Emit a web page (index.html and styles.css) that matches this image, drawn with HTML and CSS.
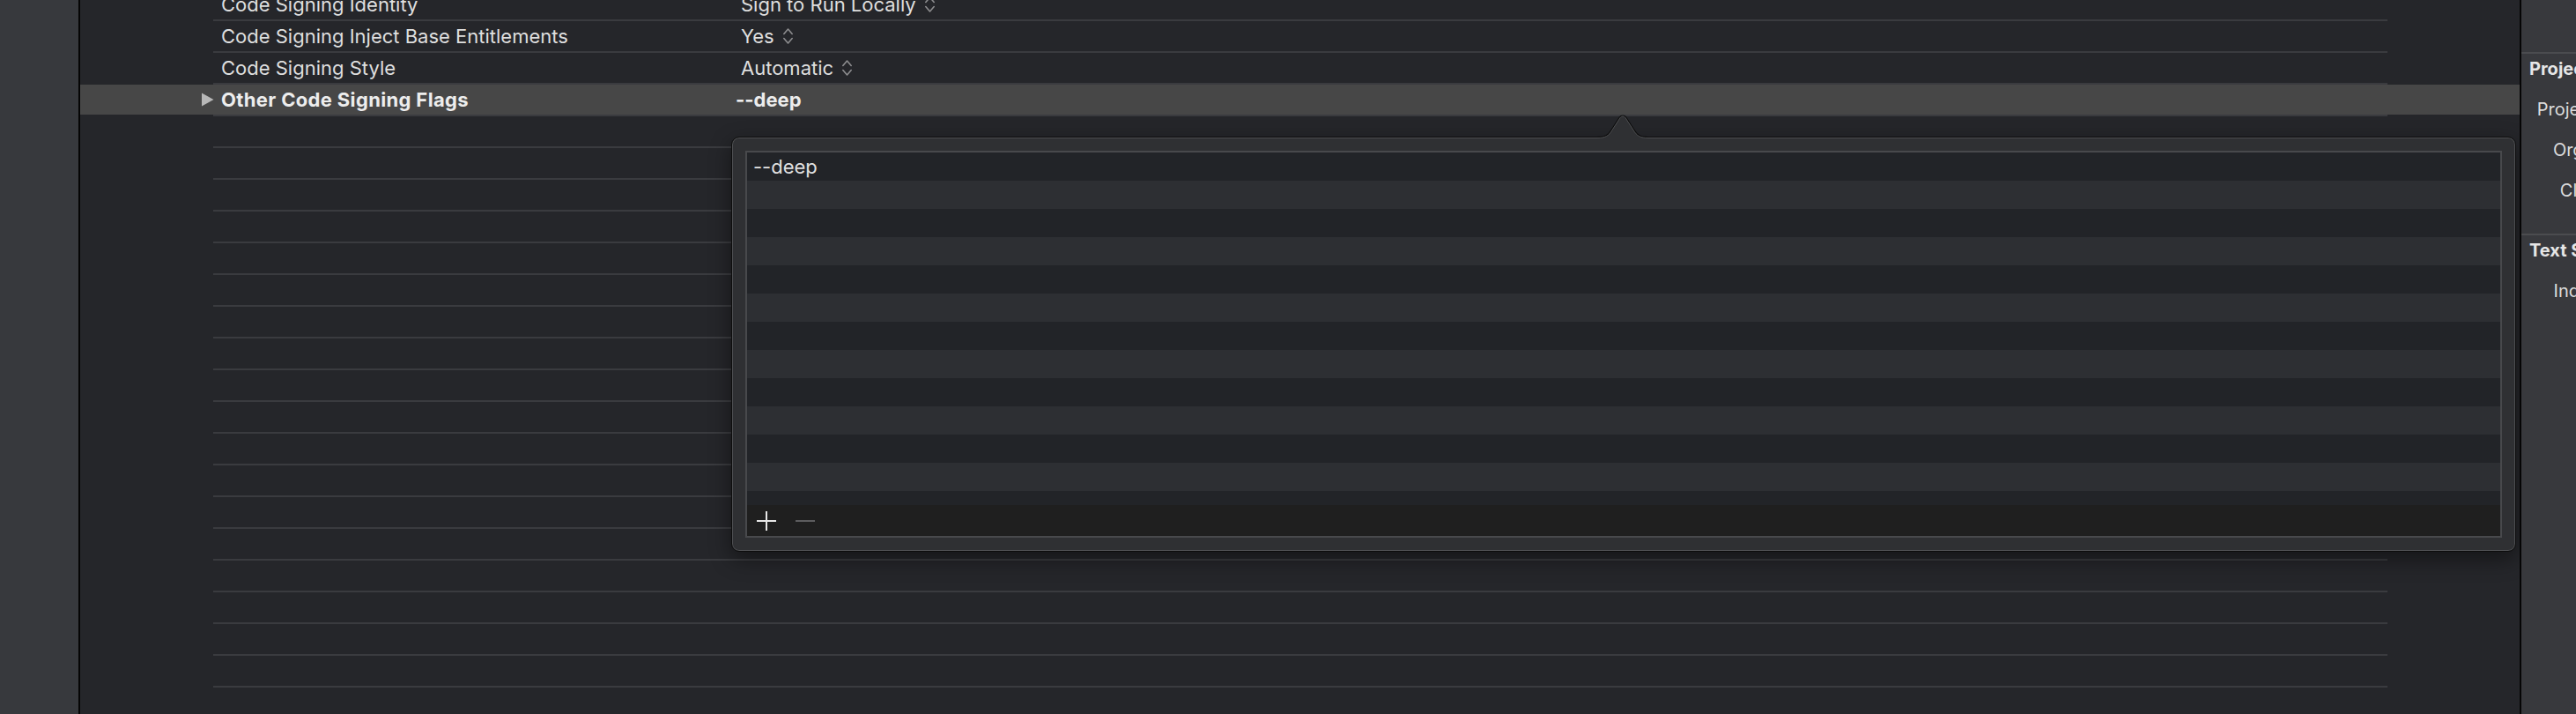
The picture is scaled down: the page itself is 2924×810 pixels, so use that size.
FILE: index.html
```html
<!DOCTYPE html>
<html lang="en">
<head>
<meta charset="utf-8">
<title>Build Settings</title>
<link rel="stylesheet" href="styles.css">
</head>
<body>
<div class="app">
  <aside class="nav"></aside>
  <main class="editor">
    <div class="rows">
      <div class="row">
        <div class="row-main"><div class="gutter"></div><div class="name">Code Signing Identity</div><div class="value"><span class="popup">Sign to Run Locally<svg class="chev" viewBox="0 0 13 20"><path d="M1.8 7.5 L6.5 2 L11.2 7.5 M1.8 12.5 L6.5 18 L11.2 12.5"/></svg></span></div></div>
        <div class="row-line"></div>
      </div>
      <div class="row">
        <div class="row-main"><div class="gutter"></div><div class="name">Code Signing Inject Base Entitlements</div><div class="value"><span class="popup">Yes<svg class="chev" viewBox="0 0 13 20"><path d="M1.8 7.5 L6.5 2 L11.2 7.5 M1.8 12.5 L6.5 18 L11.2 12.5"/></svg></span></div></div>
        <div class="row-line"></div>
      </div>
      <div class="row">
        <div class="row-main"><div class="gutter"></div><div class="name">Code Signing Style</div><div class="value"><span class="popup">Automatic<svg class="chev" viewBox="0 0 13 20"><path d="M1.8 7.5 L6.5 2 L11.2 7.5 M1.8 12.5 L6.5 18 L11.2 12.5"/></svg></span></div></div>
        <div class="row-line"></div>
      </div>
      <div class="row selected">
        <div class="row-main"><div class="gutter"><svg class="disclosure" viewBox="0 0 15 16"><path d="M1 0.5 L14.5 8 L1 15.5 Z"/></svg></div><div class="name">Other Code Signing Flags</div><div class="value">--deep</div></div>
        <div class="row-line"></div>
      </div>
      <div class="row"><div class="row-main"></div><div class="row-line"></div></div>
      <div class="row"><div class="row-main"></div><div class="row-line"></div></div>
      <div class="row"><div class="row-main"></div><div class="row-line"></div></div>
      <div class="row"><div class="row-main"></div><div class="row-line"></div></div>
      <div class="row"><div class="row-main"></div><div class="row-line"></div></div>
      <div class="row"><div class="row-main"></div><div class="row-line"></div></div>
      <div class="row"><div class="row-main"></div><div class="row-line"></div></div>
      <div class="row"><div class="row-main"></div><div class="row-line"></div></div>
      <div class="row"><div class="row-main"></div><div class="row-line"></div></div>
      <div class="row"><div class="row-main"></div><div class="row-line"></div></div>
      <div class="row"><div class="row-main"></div><div class="row-line"></div></div>
      <div class="row"><div class="row-main"></div><div class="row-line"></div></div>
      <div class="row"><div class="row-main"></div><div class="row-line"></div></div>
      <div class="row"><div class="row-main"></div><div class="row-line"></div></div>
      <div class="row"><div class="row-main"></div><div class="row-line"></div></div>
      <div class="row"><div class="row-main"></div><div class="row-line"></div></div>
      <div class="row"><div class="row-main"></div><div class="row-line"></div></div>
      <div class="row"><div class="row-main"></div><div class="row-line"></div></div>
      <div class="row"><div class="row-main"></div><div class="row-line"></div></div>
    </div>

    <div class="popover">
      <svg class="arrow" viewBox="0 0 58 29">
        <path class="arrow-dark" d="M0 26.5 C9 26.5 13 24.5 17 17.5 L26 3.6 C27.5 1.4 30.5 1.4 32 3.6 L41 17.5 C45 24.5 49 26.5 58 26.5"/>
        <path class="arrow-fill" d="M0 26.5 C9 26.5 13 24.5 17 17.5 L26 3.6 C27.5 1.4 30.5 1.4 32 3.6 L41 17.5 C45 24.5 49 26.5 58 26.5 L58 29 L0 29 Z"/>
        <path class="arrow-light" d="M0 26.5 C9 26.5 13 24.5 17 17.5 L26 3.6 C27.5 1.4 30.5 1.4 32 3.6 L41 17.5 C45 24.5 49 26.5 58 26.5"/>
      </svg>
      <div class="list">
        <div class="list-rows">
          <div class="item">--deep</div>
          <div class="item"></div>
          <div class="item"></div>
          <div class="item"></div>
          <div class="item"></div>
          <div class="item"></div>
          <div class="item"></div>
          <div class="item"></div>
          <div class="item"></div>
          <div class="item"></div>
          <div class="item"></div>
          <div class="item"></div>
          <div class="item"></div>
        </div>
        <div class="list-footer">
          <svg class="btn-icon add" viewBox="0 0 22 22"><path d="M0 11 H22 M11 0 V22"/></svg>
          <svg class="btn-icon remove" viewBox="0 0 22 22"><path d="M0 11 H22"/></svg>
        </div>
      </div>
    </div>
  </main>
  <aside class="inspector">
    <div class="insp-top"></div>
    <section class="insp-sec">
      <div class="insp-head">Project Document</div>
      <div class="insp-row"><span class="insp-label">Project Format</span></div>
      <div class="insp-row"><span class="insp-label">Organization</span></div>
      <div class="insp-row"><span class="insp-label">Class Prefix</span></div>
    </section>
    <section class="insp-sec">
      <div class="insp-head">Text Settings</div>
      <div class="insp-row"><span class="insp-label">Indent Using</span></div>
      <div class="insp-row"><span class="insp-label">Widths</span></div>
    </section>
  </aside>
</div>
</body>
</html>
```
FILE: styles.css
```css
* { box-sizing: border-box; }
html, body { margin: 0; height: 100%; }
body {
  background: #25262a;
  font-family: Inter, "Noto Sans", "Liberation Sans", sans-serif;
  color: #dfdfdf;
  overflow: hidden;
}
.app { display: flex; height: 810px; }

.nav {
  width: 91px;
  flex: none;
  background: #37393d;
  border-right: 2px solid #050505;
}

.editor {
  flex: 1;
  position: relative;
  overflow: hidden;
  background: #25262a;
}

/* settings rows */
.rows { margin-top: -12px; }
.row { height: 36px; display: flex; flex-direction: column; }
.row-main {
  height: 34px;
  display: flex;
  align-items: center;
  font-size: 22px;
  line-height: 34px;
  white-space: nowrap;
}
.row-line {
  height: 2px;
  margin: 0 150px 0 151px;
  background: #3a3b3f;
}
.gutter {
  width: 151px;
  flex: none;
  padding-left: 137px;
  display: flex;
  align-items: center;
}
.disclosure { width: 15px; height: 16px; flex: none; fill: #b8b8b8; }
.name { width: 593px; flex: none; padding-left: 9px; }
.value { flex: 1; }
.popup { display: inline-flex; align-items: center; padding-left: 6px; }
.chev {
  width: 13px;
  height: 20px;
  margin-left: 9px;
  fill: none;
  stroke: #8d8d8f;
  stroke-width: 1.6;
  stroke-linecap: round;
  stroke-linejoin: round;
}
.row.selected .row-main {
  background: #474747;
  font-weight: 700;
  color: #ededed;
}
.row.selected .name { letter-spacing: 0.35px; }

/* popover */
.popover {
  position: absolute;
  left: 739px;
  top: 155px;
  width: 2026px;
  height: 471px;
  padding: 15px;
  border: 1px solid #0d0d0d;
  border-radius: 9px;
  background: #2f3033;
  box-shadow: inset 0 0 0 1px #4e4f52, 0 8px 24px rgba(0, 0, 0, 0.45);
}
.arrow {
  position: absolute;
  left: 982px;
  top: -26px;
  width: 58px;
  height: 29px;
  overflow: visible;
}
.arrow-dark { fill: none; stroke: #0d0d0d; stroke-width: 3; }
.arrow-fill { fill: #2f3033; }
.arrow-light { fill: none; stroke: #4e4f52; stroke-width: 1; }

.list {
  height: 439px;
  border: 2px solid #48494c;
  display: flex;
  flex-direction: column;
  background: #222428;
}
.list-rows { height: 400px; overflow: hidden; flex: none; }
.item {
  height: 32px;
  line-height: 33px;
  padding-left: 7px;
  font-size: 22px;
  color: #e0e0e0;
  background: #222428;
}
.item:nth-child(even) { background: #2d2f33; }
.list-footer {
  flex: 1;
  background: #1f1f1f;
  display: flex;
  align-items: center;
  padding-left: 11px;
  gap: 22px;
}
.btn-icon { width: 22px; height: 22px; fill: none; stroke-width: 2; }
.btn-icon.add { stroke: #e6e6e6; }
.btn-icon.remove { stroke: #5c5c5e; }

/* inspector */
.inspector {
  width: 64px;
  flex: none;
  background: #38393d;
  border-left: 2px solid #050505;
  overflow: hidden;
}
.insp-top { height: 59px; }
.insp-sec {
  width: 400px;
  border-top: 2px solid #4b4c4f;
  padding: 5px 0 26px;
  white-space: nowrap;
}
.insp-head {
  height: 24px;
  line-height: 24px;
  margin-bottom: 11px;
  padding-left: 9px;
  font-size: 20px;
  font-weight: 700;
  color: #e6e6e6;
}
.insp-row {
  height: 46px;
  line-height: 46px;
  font-size: 20px;
  color: #dcdcdc;
}
.insp-label {
  display: inline-block;
  width: 156px;
  text-align: right;
}
```
